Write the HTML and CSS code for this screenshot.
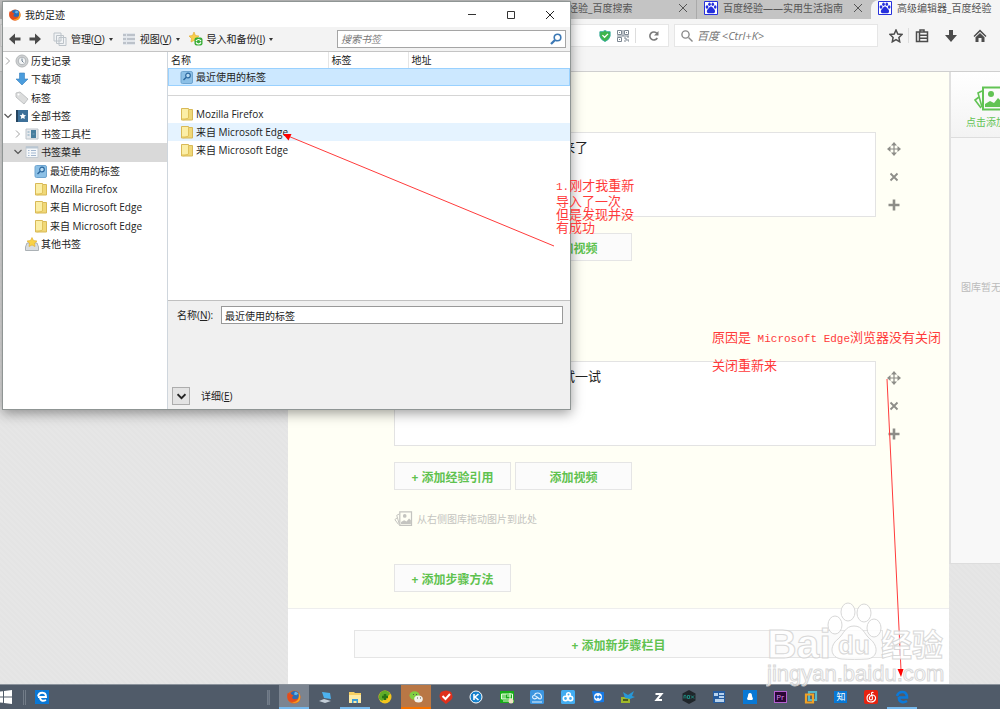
FILE: index.html
```html
<!DOCTYPE html>
<html lang="zh-CN">
<head>
    <meta charset="UTF-8">
    <meta name="viewport" content="width=device-width, initial-scale=1.0">
    <title>高级编辑器_百度经验</title>
    <link rel="stylesheet" href="styles.css">
</head>
<body>
    <!-- Shared icons -->
    <svg class="sprite" aria-hidden="true">
        <symbol id="firefox" viewBox="0 0 16 16">
            <circle cx="8" cy="8" r="7.5" fill="#e8641b"/>
            <circle cx="8.6" cy="6.2" r="5.2" fill="#2a6cb5"/>
            <path d="M9 2c2 0 3.500 1 4 3-1-.6-2 0-2.200 1L8 5z" fill="#69b8e8"/>
            <path d="M1 3c1 1 2 1.200 3.500 1C5 5 6 5.800 7.500 6 7 7.200 5.500 7.500 6 9c1 2 4 2 6 .500C11 14 4 15 1 11 0 8 0 5 1 3z" fill="#e34c1c"/>
            <path d="M13.300 3c2.700 3 2.500 8-.500 10.500-2 1.500-5 1.500-7 .5 4 0 7-2 7.500-5 .4-2 .3-4 0-6z" fill="#fba41f"/>
        </symbol>
        <symbol id="folder" viewBox="0 0 14 14">
            <path d="M1.500 1.500h7v1h4v10.500h-11z" fill="#f0d878" stroke="#d8b957"/>
            <path d="M2 2h6v9H2z" fill="#fbeea6"/>
            <path d="M8.500 3v8l-5 2" fill="none" stroke="#e0c25c"/>
        </symbol>
        <symbol id="recent" viewBox="0 0 14 14">
            <rect x="1" y="1.500" width="11.500" height="12" rx="1.500" fill="#8cc0e6" stroke="#6fa5d0"/>
            <circle cx="8" cy="5.500" r="2.300" fill="#b9dcf3" stroke="#2c689f" stroke-width="1.200"/>
            <path d="M6.300 7.300 3.500 10" stroke="#2c689f" stroke-width="1.500"/>
        </symbol>
        <symbol id="paw" viewBox="0 0 14 14">
            <path d="M.5.5h13v13H.5z" fill="#fff" stroke="#2630dc"/>
            <g fill="#2630dc">
                <ellipse cx="3" cy="6" rx="1.400" ry="1.800"/>
                <ellipse cx="5.500" cy="3.300" rx="1.300" ry="1.800"/>
                <ellipse cx="8.800" cy="3.300" rx="1.300" ry="1.800"/>
                <ellipse cx="11.200" cy="6" rx="1.300" ry="1.800"/>
                <path d="M7 5.500c1.600 0 2 1.600 3 2.500 1.500 1.300 1.600 4-.5 4.200-1 .1-4 .1-5 0C2.300 12 2.500 9.300 4 8c1-.9 1.400-2.500 3-2.500z"/>
            </g>
        </symbol>
        <symbol id="close" viewBox="0 0 10 10">
            <path d="M1 1l8 8M9 1 1 9" stroke="currentColor" fill="none"/>
        </symbol>
        <symbol id="right" viewBox="0 0 8 8">
            <path d="M2 0.500 5.500 4 2 7.500" stroke="#a0a0a0" fill="none"/>
        </symbol>
        <symbol id="down" viewBox="0 0 8 8">
            <path d="M.5 2 4 5.500 7.500 2" stroke="#555" fill="none" stroke-width="1.200"/>
        </symbol>
        <symbol id="move" viewBox="0 0 14 14">
            <path d="M7 0 10 3.500H7.600V6.400H10.500V4L14 7l-3.500 3V7.600H7.600v2.900H10L7 14l-3-3.500h2.400V7.600H3.500V10L0 7l3.500-3v2.400h2.900V3.500H4z" fill="#8d8d88"/>
        </symbol>
        <symbol id="remove" viewBox="0 0 14 14">
            <path d="M3.500 3.500l7 7M10.500 3.500l-7 7" stroke="#8d8d88" stroke-width="1.800"/>
        </symbol>
        <symbol id="plus" viewBox="0 0 14 14">
            <path d="M7 1.500v11M1.500 7h11" stroke="#8d8d88" stroke-width="2.600"/>
        </symbol>
        <symbol id="gallery" viewBox="0 0 30 26">
            <path d="M9 1.500h19v22H9z" fill="none" stroke="currentColor" stroke-width="2"/>
            <circle cx="17" cy="8" r="3" fill="currentColor"/>
            <path d="M11 21v-3l5-3 4 2 4-5 3 3v6z" fill="currentColor"/>
            <path d="M8 5 4 7l4 14M5 11l-4 3 6 8" fill="none" stroke="currentColor" stroke-width="1.600"/>
        </symbol>
    </svg>

    <div class="browser">
        <nav class="tabs">
            <div class="tab">
                <span class="tab-title no-icon">百度经验_百度搜索</span>
                <button class="tab-close" aria-label="关闭"><svg><use href="#close"/></svg></button>
            </div>
            <div class="tab">
                <svg class="tab-icon"><use href="#paw"/></svg>
                <span class="tab-title">百度经验——实用生活指南</span>
                <button class="tab-close" aria-label="关闭"><svg><use href="#close"/></svg></button>
            </div>
            <div class="tab active">
                <svg class="tab-icon"><use href="#paw"/></svg>
                <span class="tab-title">高级编辑器_百度经验</span>
            </div>
        </nav>

        <div class="nav-bar">
            <div class="url-bar">
                <svg width="12" height="14" viewBox="0 0 14 14">
                    <path d="M1 2q4 .5 6-1.500Q9 2.500 13 2v5q-1 4.500-6 6.500Q2 11.500 1 7z" fill="#3fb54c" stroke="#33a9a2"/>
                    <path d="M4 6l2.500 2.500 4-4" fill="none" stroke="#fff" stroke-width="1.500"/>
                </svg>
                <svg width="12" height="12" viewBox="0 0 12 12" fill="none" stroke="#7d8792">
                    <path d="M.5.5h4v4h-4zM7.500.5h4v4h-4zM.5 7.500h4v4h-4zM2 2.500h1M9 2.500h1M2 9.500h1M6 0v6M0 6h12M7 8h2v2h3M7 11h2M11 6v2M11 11h1"/>
                </svg>
                <span class="bar-line"></span>
                <svg width="12" height="12" viewBox="0 0 12 12">
                    <path d="M9.300 8A4 4 0 1 1 9 3.500" fill="none" stroke="#7a7a7a" stroke-width="1.600"/>
                    <path d="M10.500 1v4.500H6z" fill="#7a7a7a"/>
                </svg>
            </div>
            <label class="search-bar">
                <svg width="12" height="12" viewBox="0 0 12 12" fill="none" stroke="#8a8a8a" stroke-width="1.400">
                    <circle cx="4.500" cy="4.500" r="3.600"/><path d="M7.500 7.500 11.500 11.500"/>
                </svg>
                <input type="text" placeholder="百度 &lt;Ctrl+K&gt;" aria-label="搜索">
            </label>
            <div class="nav-icons">
                <button aria-label="收藏"><svg viewBox="0 0 14 14"><path d="M7 1l1.800 4 4.200.5-3.100 3 .8 4.300L7 10.600 3.300 12.800l.8-4.300L1 5.500 5.200 5z" fill="none" stroke="#4c4c4c" stroke-width="1.500"/></svg></button>
                <span class="bar-line"></span>
                <button aria-label="书签"><svg viewBox="0 0 14 14"><path d="M1.500 3h11v9.500h-11zM5 1h4v2H5zM4 6.200h9M4 9.300h9M4.500 3v9.500" fill="none" stroke="#4c4c4c" stroke-width="1.500"/></svg></button>
                <button aria-label="下载"><svg viewBox="0 0 14 14"><path d="M5 1h4v5h4l-6 7-6-7h4z" fill="#4c4c4c"/></svg></button>
                <button aria-label="主页"><svg viewBox="0 0 14 14"><path d="M7 .5 13.500 7l-1 1L7 2.800 1.500 8l-1-1zM7 4l4.500 4.300V13H8.500V9h-3v4h-3V8.300z" fill="#4c4c4c"/></svg></button>
            </div>
        </div>

        <div class="page">
            <main class="editor">
                <section class="steps">
                    <div class="step">
                        <div class="step-body">
                            <textarea class="step-text" aria-label="步骤内容">来了</textarea>
                            <div class="step-tools">
                                <button aria-label="移动"><svg><use href="#move"/></svg></button>
                                <button aria-label="删除"><svg><use href="#remove"/></svg></button>
                                <button aria-label="添加"><svg><use href="#plus"/></svg></button>
                            </div>
                        </div>
                        <div class="step-actions">
                            <button class="add-btn">+ 添加经验引用</button>
                            <button class="add-btn">添加视频</button>
                        </div>
                        <p class="drag-hint"><svg><use href="#gallery"/></svg>从右侧图库拖动图片到此处</p>
                    </div>
                    <div class="step">
                        <div class="step-body">
                            <textarea class="step-text" aria-label="步骤内容">试一试</textarea>
                            <div class="step-tools">
                                <button aria-label="移动"><svg><use href="#move"/></svg></button>
                                <button aria-label="删除"><svg><use href="#remove"/></svg></button>
                                <button aria-label="添加"><svg><use href="#plus"/></svg></button>
                            </div>
                        </div>
                        <div class="step-actions">
                            <button class="add-btn">+ 添加经验引用</button>
                            <button class="add-btn">添加视频</button>
                        </div>
                        <p class="drag-hint"><svg><use href="#gallery"/></svg>从右侧图库拖动图片到此处</p>
                    </div>
                    <button class="add-btn">+ 添加步骤方法</button>
                </section>
                <section class="new-section">
                    <button class="add-btn wide">+ 添加新步骤栏目</button>
                </section>
            </main>
            <aside class="gallery">
                <button class="gallery-add">
                    <svg><use href="#gallery"/></svg>
                    <span>点击添加</span>
                </button>
                <p class="gallery-empty">图库暂无</p>
            </aside>
        </div>
    </div>

    <footer class="taskbar">
        <button class="start" aria-label="开始"><svg width="12" height="14" viewBox="0 0 12 14"><path d="M0 1.600 3 1.200v5.300H0zM4 1 12 0v6.500H4zM0 7.500h3v5.300L0 12.400zM4 7.500h8V14L4 13z" fill="#fff"/></svg></button>
        <span class="grip"></span>
        <button class="start" aria-label="Edge"><svg width="14" height="14" viewBox="0 0 14 14"><path d="M0 0h14v14H0z" fill="#0a78d6"/><path d="M3 7h8C11 1.500 4 1.500 3 6.500M5 7c0 4 3 4.500 6 3" fill="none" stroke="#fff" stroke-width="1.900"/></svg></button>
        <span class="grip thick"></span>
        <div class="tasks">
            <button class="task current running" aria-label="Firefox"><svg><use href="#firefox"/></svg></button>
            <button class="task" aria-label="电脑"><svg viewBox="0 0 14 14"><path d="M4 2l8 1 1 6-7-1z" fill="#4cb2ef"/><path d="M1 11l5-2 7 2-6 2z" fill="#c4cfd8"/></svg></button>
            <button class="task running" aria-label="文件"><svg viewBox="0 0 14 14"><path d="M1 2h5l1 1h6v10H1z" fill="#f6cf62"/><path d="M1 5h12v8H1z" fill="#fdeba6"/><path d="M4 9h6v4H8.500v-2h-3v2H4z" fill="#3c9ed8"/></svg></button>
            <button class="task" aria-label="安全"><svg viewBox="0 0 14 14"><circle cx="7" cy="7" r="6.500" fill="#f3c51c"/><path d="M1 6q1-5 6-5.500Q11 1 12 4L9 7l-5 4-3-2z" fill="#60ad28"/><path d="M7 4v6M4 7h6" stroke="#287514" stroke-width="2.500"/></svg></button>
            <button class="task alert" aria-label="微信"><svg viewBox="0 0 14 14"><ellipse cx="5.500" cy="5.500" rx="5" ry="4.200" fill="#80cf42"/><ellipse cx="9.500" cy="9" rx="4.300" ry="3.600" fill="#f3f3ed"/><path d="M4 4.500h1M7 4.500h1M8 8h1M11 8h1" stroke="#555"/></svg></button>
            <button class="task" aria-label="待办"><svg viewBox="0 0 14 14"><path d="M2 2q5-3 10 0 3 5 0 8l-5 4-5-4q-3-4 0-8z" fill="#df301c"/><path d="M3.500 6l3 3 4.500-5" fill="none" stroke="#fff" stroke-width="2"/></svg></button>
            <button class="task" aria-label="酷狗"><svg viewBox="0 0 14 14"><circle cx="7" cy="7" r="6" fill="#1681cc" stroke="#fff"/><path d="M5 4v6M9.500 4 6 7l3.500 3" stroke="#fff" stroke-width="1.600" fill="none"/></svg></button>
            <button class="task" aria-label="爱奇艺"><svg viewBox="0 0 14 14"><path d="M0 1h14v12H0z" fill="#19ad19"/><path d="M1.500 4h11v5h-11zM3 4v5M5 4v5M7 6h4M10 3v6M3 11h6" fill="none" stroke="#e5ffd9"/><circle cx="11" cy="11" r="2.500" fill="#efe2c4"/></svg></button>
            <button class="task" aria-label="云盘"><svg viewBox="0 0 14 14"><rect width="14" height="14" rx="1.500" fill="#3c95df"/><path d="M7 8q-4 2-4.500-1Q3 4 7 7q4 4 4.500 0Q11 3 7.500 3 5 3 4.500 5M2 12h10" fill="none" stroke="#dff1ff" stroke-width="1.200"/></svg></button>
            <button class="task" aria-label="网盘"><svg viewBox="0 0 14 14"><rect width="14" height="14" rx="1.500" fill="#42acf0"/><g fill="none" stroke="#fff" stroke-width="1.600"><circle cx="4.500" cy="8.500" r="2.200"/><circle cx="9.500" cy="8.500" r="2.200"/><circle cx="7.500" cy="4.500" r="1.800"/></g></svg></button>
            <button class="task" aria-label="远程"><svg viewBox="0 0 14 14"><path d="M1 1 13 2v10L3 13z" fill="#1679e5"/><circle cx="7" cy="7" r="4" fill="#eef6ff"/><path d="M3.500 7 6 5v1.300h2V5l2.500 2L8 9V7.700H6V9z" fill="#1679e5"/></svg></button>
            <button class="task" aria-label="工具"><svg viewBox="0 0 14 14"><path d="M0 7h9v6H0z" fill="#9fb82a"/><path d="M2 2l5 3 6-4-2 5 3 1-5 2-5-1z" fill="#2798d8"/><path d="M2 10h5" stroke="#33401a" stroke-width="1.500"/></svg></button>
            <button class="task" aria-label="Z"><svg viewBox="0 0 14 14"><path d="M3.500 4h6L4.500 10H10" fill="none" stroke="#fff" stroke-width="2"/></svg></button>
            <button class="task" aria-label="nox"><svg viewBox="0 0 14 14"><path d="M7 0l6.500 3.500v7L7 14 .5 10.500v-7z" fill="#20262b"/><path d="M2 8.500v-3q2-1 2 1v2M5.500 5.500h2v3h-2zM9 5.500l3 3M12 5.500l-3 3" fill="none" stroke="#1e8a80"/></svg></button>
            <button class="task" aria-label="文档"><svg viewBox="0 0 14 14"><path d="M1 1h12v12H1z" fill="#265da0"/><path d="M2 3h4v3H2zM7 3h5v2H7zM7 6h5v2H7zM3 9h9v3H3z" fill="#b8d2ed"/></svg></button>
            <button class="task" aria-label="QQ"><svg viewBox="0 0 14 14"><path d="M0 0h14v14H0z" fill="#0878d5"/><path d="M7 3q2 0 2 3l1 3-1 1H5L4 9l1-3q0-3 2-3z" fill="#fff"/></svg></button>
            <button class="task premiere"><span>Pr</span></button>
            <button class="task" aria-label="虚拟机"><svg viewBox="0 0 14 14" fill="none" stroke-width="2.200"><path d="M5 2h7v8H5z" stroke="#54b7cb"/><path d="M2 4.500h7v8H2z" stroke="#f1a225"/></svg></button>
            <button class="task zhihu"><span>知</span></button>
            <button class="task" aria-label="网易云音乐"><svg viewBox="0 0 14 14"><rect width="14" height="14" rx="2" fill="#e62310"/><path d="M9.500 2.500q-2-.5-2 1L8.500 8q0 2-1.500 2-2-.3-1.500-2.500Q6 5 9 5q3 1 2.500 4-1 3-4.500 3-4 0-4-4 0-3 3-4" fill="none" stroke="#fff" stroke-width="1.100"/></svg></button>
            <button class="task running" aria-label="Microsoft Edge"><svg viewBox="0 0 14 14"><path d="M4 7.500h8C12 .5 4 .5 2 6M4 7c-.5 5 4 6.500 8 4" fill="none" stroke="#0c79d8" stroke-width="2.600"/></svg></button>
        </div>
    </footer>

    <!-- Bookmark library window -->
    <div class="library">
        <header class="title-bar">
            <svg class="app-icon"><use href="#firefox"/></svg>
            <h1>我的足迹</h1>
            <div class="window-buttons">
                <button aria-label="最小化"><svg viewBox="0 0 10 10"><path d="M1 4.500h8" stroke="#333"/></svg></button>
                <button aria-label="最大化"><svg viewBox="0 0 10 10"><path d="M1.500 1.500h7v7h-7z" fill="none" stroke="#333"/></svg></button>
                <button aria-label="关闭"><svg><use href="#close"/></svg></button>
            </div>
        </header>

        <div class="tool-bar">
            <button class="arrow" aria-label="后退"><svg viewBox="0 0 12 12"><path d="M0 6 6 .5V4.500h5.500v3H6v4z" fill="#4a4a4a"/></svg></button>
            <button class="arrow" aria-label="前进"><svg viewBox="0 0 12 12"><path d="M12 6 6 .5V4.500H.5v3H6v4z" fill="#4a4a4a"/></svg></button>
            <button class="menu manage">
                <svg viewBox="0 0 14 14" fill="#f1f3f5" stroke="#bcc3c9"><path d="M1 1h7v8H1zM3.500 3.500h7v8h-7zM6 5.500h7v8H6z"/></svg>
                管理(<u>O</u>)<i></i>
            </button>
            <button class="menu views">
                <svg viewBox="0 0 14 14"><path d="M1 1h12v12H1z" fill="#e3e7ec"/><path d="M1 3h3M5 3h8M1 7h3M5 7h8M1 11h3M5 11h8" stroke="#bcc2ca" stroke-width="2"/></svg>
                视图(<u>V</u>)<i></i>
            </button>
            <button class="menu">
                <svg viewBox="0 0 14 14"><path d="M5 0l1.500 3.500 3.500.5-2.500 2.500.5 4L5 8.500 2 10l.5-3.500L0 4l3.500-.5z" fill="#f8cf4b" stroke="#e0a72e" stroke-width=".6"/><rect x="5.500" y="5.500" width="8" height="8" rx="2" fill="#39ad36"/><path d="M7 9q2.500-3 5 0M12 10.500q-2.500 3-5 0" fill="none" stroke="#fff" stroke-width="1.200"/></svg>
                导入和备份(<u>I</u>)<i></i>
            </button>
            <label class="find">
                <input type="text" placeholder="搜索书签" aria-label="搜索书签">
                <svg viewBox="0 0 12 12" fill="none" stroke="#3c78b4"><circle cx="7.500" cy="4.500" r="3.300" stroke-width="1.600"/><path d="M5 7 1 11" stroke-width="2.300"/></svg>
            </label>
        </div>

        <div class="library-body">
            <div class="side">
                <ul class="tree">
                    <li><svg class="twisty"><use href="#right"/></svg><svg viewBox="0 0 14 14"><circle cx="7" cy="7" r="6" fill="#d0d2d3" stroke="#b5b9bb"/><circle cx="7" cy="7" r="3.800" fill="#f3f5f6" stroke="#b0b5b9"/><path d="M7 4.500V7l1.500 1.500" fill="none" stroke="#687b8c"/></svg>历史记录</li>
                    <li><span class="twisty"></span><svg viewBox="0 0 14 14"><path d="M4.500 1h5v6H13l-6 6-6-6h3.500z" fill="#4b9ddd" stroke="#3880bd" stroke-width=".6"/></svg>下载项</li>
                    <li><span class="twisty"></span><svg viewBox="0 0 14 14"><path d="M1 2l4-1 8 7-4 5-8-7z" fill="#dcdddd" stroke="#c0c2c3"/><circle cx="3.500" cy="3.500" r="1" fill="#fff"/></svg>标签</li>
                    <li><svg class="twisty"><use href="#down"/></svg><svg viewBox="0 0 14 14"><path d="M2 1h11v12H2z" fill="#3d7099"/><path d="M1 1h2v12H1z" fill="#25445e"/><path d="M7.800 4l1 2 2.200.3-1.600 1.500.4 2.200-2-1-2 1 .4-2.200-1.600-1.500L6.800 6z" fill="#fff"/></svg>全部书签</li>
                    <li class="level-1"><svg class="twisty"><use href="#right"/></svg><svg viewBox="0 0 14 14"><path d="M1 2h12v10H1z" fill="#e6e9ec" stroke="#bcc4cb"/><path d="M6 3h5v8H6z" fill="#477e9e"/><path d="M2.500 5h2M2.500 8h2M7.500 7h2" stroke="#7fa5bd"/></svg>书签工具栏</li>
                    <li class="level-1 chosen"><svg class="twisty"><use href="#down"/></svg><svg viewBox="0 0 14 14"><path d="M1 1.500h12v11H1z" fill="#f6f8fa" stroke="#c5cbd1"/><path d="M1 2.500h12" stroke="#b9c6d2" stroke-width="2"/><path d="M3 5.500h1.500M3 8h1.500M3 10.500h1.500M6 5.500h5M6 8h5M6 10.500h5" stroke="#a3b7cf"/></svg>书签菜单</li>
                    <li class="level-2"><svg><use href="#recent"/></svg>最近使用的标签</li>
                    <li class="level-2"><svg><use href="#folder"/></svg>Mozilla Firefox</li>
                    <li class="level-2"><svg><use href="#folder"/></svg>来自 Microsoft Edge</li>
                    <li class="level-2"><svg><use href="#folder"/></svg>来自 Microsoft Edge</li>
                    <li class="level-1"><span class="twisty"></span><svg viewBox="0 0 14 14"><path d="M2 6h10l1.500 4v3.500H.5V10z" fill="#d9dde0" stroke="#abb1b5"/><path d="M7 .5l1.500 3 3.500.5-2.500 2.300.5 3.200-3-1.500L4 9.500l.5-3.200L2 4l3.500-.5z" fill="#f9d245" stroke="#dfac2c" stroke-width=".6"/></svg>其他书签</li>
                </ul>
            </div>

            <div class="content">
                <table class="places">
                    <thead>
                        <tr><th class="name-col">名称</th><th class="tag-col">标签</th><th>地址</th></tr>
                    </thead>
                    <tbody>
                        <tr class="selected"><td colspan="3"><div><svg><use href="#recent"/></svg>最近使用的标签</div></td></tr>
                        <tr class="separator"><td colspan="3"><hr></td></tr>
                        <tr><td colspan="3"><div><svg><use href="#folder"/></svg>Mozilla Firefox</div></td></tr>
                        <tr class="hover"><td colspan="3"><div><svg><use href="#folder"/></svg>来自 Microsoft Edge</div></td></tr>
                        <tr><td colspan="3"><div><svg><use href="#folder"/></svg>来自 Microsoft Edge</div></td></tr>
                    </tbody>
                </table>
                <div class="details">
                    <div class="field">
                        <label for="itemName">名称(<u>N</u>):</label>
                        <input type="text" id="itemName" value="最近使用的标签">
                    </div>
                    <div class="more">
                        <button id="expander" aria-label="展开"><svg viewBox="0 0 8 8"><path d="M.5 2 4 5.500 7.500 2" fill="none" stroke="#222" stroke-width="1.600"/></svg></button>
                        <label for="expander">详细(<u>E</u>)</label>
                    </div>
                </div>
            </div>
        </div>
    </div>

    <!-- Red notes drawn over the screen -->
    <p class="note note-import"><span>1.</span>刚才我重新<br>导入了一次<br>但是发现并没<br>有成功</p>
    <p class="note note-reason">原因是<span> Microsoft Edge</span>浏览器没有关闭<br>关闭重新来</p>
    <svg class="arrows" width="1000" height="709" viewBox="0 0 1000 709">
        <g stroke="#ff3b3b" fill="none"><path d="M554 246 288 136"/><path d="M887 379 901 670"/></g>
        <g fill="#f00"><path d="M283 134l8.500 0-3 6.500z"/><path d="M901 677l-3.500-8h6z"/></g>
    </svg>

    <svg class="watermark" width="184" height="100" viewBox="0 0 184 100">
        <g fill="#fff" stroke="#d2d2d2" stroke-width="1">
            <text class="mark-big" x="1" y="62">Bai</text>
            <ellipse cx="69" cy="29" rx="7" ry="9"/>
            <ellipse cx="82" cy="16" rx="7" ry="9"/>
            <ellipse cx="98" cy="17" rx="7" ry="9"/>
            <ellipse cx="108" cy="32" rx="7" ry="9"/>
            <path d="M88 30c9 0 10 8 16 13 9 7 8 19-3 20-7 .5-18 .5-25 0-12-1-13-13-4-20 6-5 7-13 16-13z"/>
            <text class="mark-du" x="72" y="58">du</text>
            <text class="mark-cn" x="115" y="60">经验</text>
            <text class="mark-url" x="1" y="85">jingyan.baidu.com</text>
        </g>
    </svg>
</body>
</html>
```
FILE: styles.css
```css
* {
    margin: 0;
    padding: 0;
    box-sizing: border-box;
}

body {
    position: relative;
    min-height: 100vh;
    display: flex;
    flex-direction: column;
    overflow: hidden;
    background-color: #e5e5e5;
    color: #222;
    font-family: "Open Sans", "Noto Sans CJK SC", sans-serif;
    font-size: 10px;
    line-height: 14px;
}

button,
input,
textarea {
    font: inherit;
    color: inherit;
    border: none;
    background: none;
    outline: none;
}

button {
    white-space: nowrap;
}

svg {
    flex: none;
}

.sprite {
    position: absolute;
    width: 0;
    height: 0;
}

.browser {
    flex: 1;
    display: flex;
    flex-direction: column;
}

/* Tabs */
.tabs {
    display: flex;
    height: 19px;
    padding-left: 523px;
    background-color: #c4c4c4;
    color: #555;
}

.tab {
    flex: none;
    width: 174px;
    display: flex;
    align-items: center;
    gap: 5px;
    padding: 0 8px 3px 7px;
    border-right: 1px solid #aaa;
}

.tab-icon {
    width: 14px;
    height: 14px;
}

.tab-title {
    flex: 1;
    white-space: nowrap;
}

.tab-title.no-icon {
    padding-left: 18px;
}

.tab-close,
.tab-close svg {
    width: 10px;
    height: 10px;
    display: block;
}

.tab:nth-child(2) {
    border-right: none;
}

.tab.active {
    background-color: #f5f5f5;
    border-radius: 8px 0 0 0;
    border-right: none;
}

/* Address and search row */
.nav-bar {
    display: flex;
    align-items: flex-start;
    gap: 5px;
    height: 53px;
    padding: 5px 13px 0 0;
    background-color: #f5f5f5;
    border-bottom: 1px solid #cfcfcf;
}

.url-bar,
.search-bar {
    height: 23px;
    display: flex;
    align-items: center;
    background-color: #fff;
    border: 1px solid #e6e6e6;
}

.url-bar {
    flex: 1;
    justify-content: flex-end;
    gap: 6px;
    padding-right: 8px;
}

.search-bar {
    width: 204px;
    gap: 4px;
    padding-left: 6px;
}

.search-bar input {
    width: 160px;
    font-size: 11px;
    font-style: italic;
}

.bar-line {
    width: 1px;
    height: 15px;
    margin-right: 6px;
    background-color: #ddd;
}

input::placeholder {
    color: #777;
    opacity: 1;
}

.nav-icons {
    display: flex;
    align-items: center;
    gap: 15px;
    height: 23px;
    padding-left: 6px;
}

.nav-icons .bar-line {
    margin: 0 -9px 0 -10px;
}

.nav-icons button,
.nav-icons svg {
    width: 14px;
    height: 14px;
    display: block;
}

/* Editor page */
.page {
    flex: 1;
    display: grid;
    grid-template-columns: minmax(0, 1fr) 51px;
    padding-left: 288px;
    background-color: #e6e6e6;
    background-image: repeating-linear-gradient(45deg, #e4e4e4 0 2px, #e6e6e6 2px 4px);
}

.editor {
    display: flex;
    flex-direction: column;
    background-color: #fff;
}

.steps {
    padding: 60px 48px 16px 106px;
    background-color: #fffff5;
    border-bottom: 1px solid #eee;
}

.step {
    margin-bottom: 62px;
}

.step:nth-child(2) {
    margin-bottom: 36px;
}

.step-body {
    display: flex;
    gap: 11px;
    margin-bottom: 16px;
}

.step-text {
    flex: 1;
    min-width: 0;
    height: 85px;
    padding: 5px 0;
    background-color: #fff;
    border: 1px solid #e3e3e3;
    resize: none;
    font-size: 13px;
    line-height: 18px;
    text-indent: 167px;
}

.step-tools {
    display: flex;
    flex-direction: column;
    gap: 14px;
    padding-top: 10px;
}

.step-tools button,
.step-tools svg {
    width: 14px;
    height: 14px;
    display: block;
}

.step-actions {
    display: flex;
    gap: 4px;
    margin-bottom: 20px;
}

.add-btn {
    width: 117px;
    height: 28px;
    padding-top: 3px;
    background-color: #fbfbfb;
    border: 1px solid #e5e5e5;
    color: #5fc24f;
    font-size: 12px;
    font-weight: bold;
    line-height: 18px;
    display: block;
}

.drag-hint {
    height: 18px;
    display: flex;
    align-items: center;
    gap: 4px;
    color: #c4c4c0;
}

.drag-hint svg {
    width: 19px;
    height: 16px;
}

.new-section {
    flex: 1;
    padding: 21px 66px 26px;
}

.add-btn.wide {
    width: 100%;
}

/* Picture gallery */
.gallery {
    height: 492px;
    overflow: hidden;
    background-color: #f8f8f8;
    border-left: 2px solid #e0e0e0;
    border-bottom: 1px solid #ddd;
    white-space: nowrap;
}

.gallery-add {
    width: 100%;
    height: 66px;
    display: flex;
    flex-direction: column;
    gap: 3px;
    padding: 14px 0 0 15px;
    background-image: linear-gradient(#fff, #f3f3f3);
    border-bottom: 1px solid #ddd;
    color: #62c354;
}

.gallery-add svg {
    width: 30px;
    height: 26px;
    margin-left: 8px;
}

.gallery-empty {
    padding: 142px 0 0 10px;
    color: #bbb;
}

/* Taskbar */
.taskbar {
    display: flex;
    align-items: center;
    height: 25px;
    padding-right: 83px;
    background-color: #505b69;
    border-top: 1px solid #8b939c;
}

.start svg {
    display: block;
}

.grip {
    width: 3px;
    height: 15px;
    margin: 0 9px 0 11px;
    border: solid #727c88;
    border-width: 0 1px;
}

.grip.thick {
    margin: 0 9px 0 218px;
    background-color: #667180;
}

.tasks {
    flex: 1;
    display: flex;
    height: 100%;
}

.task {
    flex: 1;
    min-width: 0;
    display: flex;
    align-items: center;
    justify-content: center;
    padding-top: 2px;
    border-bottom: 2px solid transparent;
}

.task svg {
    width: 14px;
    height: 14px;
}

.task.current {
    background-color: #7b8490;
}

.task.running {
    border-bottom-color: #76b9ed;
}

.task.alert {
    background-color: #b97745;
    border-bottom-color: #f57200;
}

.task span {
    width: 13px;
    height: 12px;
    line-height: 11px;
    font-size: 9px;
    background-color: #0878d5;
    color: #fff;
}

.task.premiere span {
    line-height: 10px;
    font-size: 8px;
    background-color: #2b0735;
    border: 1px solid #b45fd0;
    color: #d98bf0;
}

/* Library window */
.library {
    position: absolute;
    top: 1px;
    left: 2px;
    width: 569px;
    height: 409px;
    display: flex;
    flex-direction: column;
    background-color: #fff;
    border: 1px solid #8f9594;
    box-shadow: 0 3px 12px rgba(0, 0, 0, 0.4);
}

.title-bar {
    display: flex;
    align-items: center;
    gap: 4px;
    height: 25px;
    padding-left: 6px;
}

.title-bar h1 {
    flex: 1;
    font-size: 10px;
    font-weight: normal;
}

.app-icon {
    width: 12px;
    height: 12px;
}

.window-buttons {
    display: flex;
    gap: 29px;
    padding-right: 15px;
}

.window-buttons button,
.window-buttons svg {
    width: 10px;
    height: 10px;
    display: block;
}

.tool-bar {
    display: flex;
    align-items: center;
    height: 25px;
    padding: 0 4px 0 6px;
    background-color: #f3f3f3;
    border-bottom: 1px solid #c4c4c4;
}

.arrow {
    width: 20px;
    height: 12px;
}

.arrow svg {
    width: 12px;
    height: 12px;
    display: block;
}

.menu {
    display: flex;
    align-items: center;
    margin-left: 9px;
}

.menu.manage {
    margin-left: 4px;
}

.menu svg {
    width: 14px;
    height: 14px;
    margin-right: 4px;
}

.menu i {
    margin-left: 4px;
    border: 2px solid transparent;
    border-top: 3px solid #333;
    border-bottom: none;
}

.find {
    width: 229px;
    height: 18px;
    display: flex;
    align-items: center;
    margin-left: auto;
    padding: 0 3px;
    background-color: #fff;
    border: 1px solid #a5a5a5;
}

.find input {
    flex: 1;
    min-width: 0;
    font-style: italic;
}

.find svg {
    width: 12px;
    height: 12px;
}

.library-body {
    flex: 1;
    display: flex;
    min-height: 0;
}

.side {
    width: 165px;
    border-right: 1px solid #cfd6dd;
}

.tree {
    height: 201px;
    display: grid;
    grid-auto-rows: 1fr;
    list-style: none;
}

.tree li {
    display: flex;
    align-items: center;
    gap: 2px;
    padding-left: 1px;
    white-space: nowrap;
}

.tree svg {
    width: 14px;
    height: 14px;
}

.tree .twisty {
    width: 8px;
    height: 8px;
    margin-right: 1px;
}

.tree .level-1 {
    padding-left: 11px;
}

.tree .level-2 {
    padding-left: 31px;
}

.tree .chosen {
    background-color: #d9d9d9;
}

.content {
    flex: 1;
    display: flex;
    flex-direction: column;
}

.places {
    width: 100%;
    table-layout: fixed;
    border-collapse: collapse;
}

.places th {
    height: 16px;
    padding-left: 3px;
    border-right: 1px solid #e5e5e5;
    font-weight: normal;
    text-align: left;
}

.places th:last-child {
    border-right: none;
}

.name-col {
    width: 160px;
}

.tag-col {
    width: 80px;
}

.places td {
    height: 18px;
}

.places td div {
    display: flex;
    align-items: center;
    gap: 2px;
    padding-left: 12px;
}

.places td svg {
    width: 14px;
    height: 14px;
}

.selected {
    background-color: #cce8ff;
    outline: 1px solid #99d1ff;
    outline-offset: -1px;
}

.hover {
    background-color: #e5f3ff;
}

.places .separator td {
    height: 19px;
}

.separator hr {
    border: none;
    border-top: 1px solid #d5d5d5;
}

.details {
    height: 109px;
    display: flex;
    flex-direction: column;
    justify-content: space-between;
    margin-top: auto;
    padding: 5px 7px 4px 4px;
    background-color: #f0f0f0;
    border-top: 1px solid #c0c0c0;
}

.field {
    display: flex;
    align-items: center;
    gap: 8px;
    padding-left: 5px;
}

.field input {
    flex: 1;
    height: 18px;
    padding: 0 3px;
    background-color: #fff;
    border: 1px solid #999;
}

.more {
    display: flex;
    align-items: center;
    gap: 11px;
}

.more button {
    width: 18px;
    height: 18px;
    display: flex;
    align-items: center;
    justify-content: center;
    background-color: #e3e3e3;
    border: 1px solid #adadad;
}

.more svg {
    width: 9px;
    height: 9px;
}

/* Notes */
.note {
    position: absolute;
    color: #ff3b3b;
    font-family: "Noto Sans CJK SC", sans-serif;
    font-size: 13px;
    line-height: 13px;
    white-space: nowrap;
}

.note-import {
    top: 178px;
    left: 556px;
}

.note-reason {
    top: 324px;
    left: 712px;
    line-height: 26px;
}

.note span {
    font-family: "Liberation Mono", monospace;
    font-size: 11px;
}

.arrows {
    position: absolute;
    top: 0;
    left: 0;
    pointer-events: none;
}

/* Watermark */
.watermark {
    position: absolute;
    right: 50px;
    bottom: 13px;
    opacity: 0.85;
    font-family: "Liberation Sans", "Noto Sans CJK SC", sans-serif;
    font-weight: bold;
    pointer-events: none;
}

.mark-big {
    font-size: 41px;
}

.mark-du {
    font-size: 26px;
}

.mark-cn {
    font-size: 31px;
}

.mark-url {
    font-size: 22px;
    font-weight: normal;
}
```
